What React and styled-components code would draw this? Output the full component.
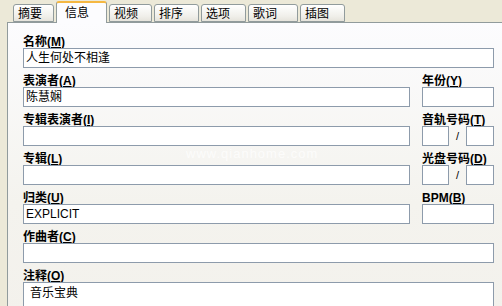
import React from "react";
import styled, { createGlobalStyle } from "styled-components";

const GlobalStyle = createGlobalStyle`
  html, body {
    margin: 0;
    padding: 0;
    background: #ece9d8;
    font-family: "Liberation Sans", "Noto Sans CJK SC", sans-serif;
  }
`;

const Window = styled.div`
  width: 502px;
  height: 306px;
  overflow: hidden;
  background: #ece9d8;
  position: relative;
`;

const TabStrip = styled.div`
  display: flex;
  align-items: flex-end;
  height: 22px;
  padding-left: 13px;
  gap: 2px;
  position: relative;
  z-index: 2;
`;

const Tab = styled.div`
  box-sizing: border-box;
  width: ${(p) => p.$w}px;
  height: ${(p) => (p.$active ? 22 : 18)}px;
  margin-bottom: ${(p) => (p.$active ? -1 : 0)}px;
  padding-left: ${(p) => (p.$active ? 8 : 4)}px;
  border: 1px solid #919b9c;
  border-bottom: ${(p) => (p.$active ? "none" : "1px solid #919b9c")};
  border-top: ${(p) => (p.$active ? "2px solid #f5b842" : "1px solid #919b9c")};
  border-radius: 3px 3px 0 0;
  background: ${(p) =>
    p.$active ? "#fcfcfe" : "linear-gradient(#ffffff, #f0efea 70%, #e6e4dc)"};
  font-size: 12px;
  line-height: ${(p) => (p.$active ? 17 : 15)}px;
  color: #000;
  font-family: "Noto Sans CJK SC", sans-serif;
`;

const Panel = styled.div`
  margin-left: 7px;
  height: 300px;
  box-sizing: border-box;
  border: 1px solid #919b9c;
  border-right: none;
  background: linear-gradient(#fcfcfe, #f4f3ee 60%, #f3f1ec);
  padding: 14px 8px 0 15px;
  display: flex;
  flex-direction: column;
  gap: 8px;
`;

const Row = styled.div`
  display: flex;
  gap: 12px;
`;

const Field = styled.div`
  display: flex;
  flex-direction: column;
  width: ${(p) => p.$w}px;
`;

const Label = styled.div`
  height: 11px;
  line-height: 11px;
  font-size: 12px;
  font-weight: bold;
  white-space: nowrap;
  color: #000;
  font-family: "Liberation Sans", "Noto Sans CJK SC", sans-serif;
`;

const Input = styled.div`
  box-sizing: border-box;
  height: ${(p) => p.$h || 20}px;
  width: ${(p) => (p.$w ? `${p.$w}px` : "auto")};
  border: 1px solid #8d9bab;
  background: #fff;
  padding: ${(p) => p.$pad || "2px 0 0 2px"};
  font-size: 12px;
  line-height: 15px;
  font-family: "Liberation Sans", "Noto Sans CJK SC", sans-serif;
  color: #000;
`;

const Pair = styled.div`
  display: flex;
  align-items: center;
  justify-content: space-between;
  font-size: 11px;
`;

const Slash = styled.span`
  width: 17px;
  text-align: center;
  font-family: "Liberation Sans", sans-serif;
`;

const Watermark = styled.div`
  position: absolute;
  left: 186px;
  top: 146px;
  font-size: 13px;
  letter-spacing: 1px;
  color: rgba(255, 255, 255, 0.7);
  font-family: "Liberation Sans", sans-serif;
`;

const tabs = [
  ["摘要", 41],
  ["信息", 51],
  ["视频", 43],
  ["排序", 45],
  ["选项", 45],
  ["歌词", 50],
  ["插图", 45],
];

const Lbl = ({ text, k }) => (
  <Label>
    {text}(<u>{k}</u>)
  </Label>
);

export default function App() {
  return (
    <Window>
      <GlobalStyle />
      <TabStrip>
        {tabs.map(([t, w]) => (
          <Tab key={t} $w={w} $active={t === "信息"}>
            {t}
          </Tab>
        ))}
      </TabStrip>
      <Panel>
        <Field $w={471}>
          <Lbl text="名称" k="M" />
          <Input>人生何处不相逢</Input>
        </Field>
        <Row>
          <Field $w={387}>
            <Lbl text="表演者" k="A" />
            <Input>陈慧娴</Input>
          </Field>
          <Field $w={72}>
            <Lbl text="年份" k="Y" />
            <Input />
          </Field>
        </Row>
        <Row>
          <Field $w={387}>
            <Lbl text="专辑表演者" k="I" />
            <Input />
          </Field>
          <Field $w={72}>
            <Lbl text="音轨号码" k="T" />
            <Pair>
              <Input $w={27} />
              <Slash>/</Slash>
              <Input $w={28} />
            </Pair>
          </Field>
        </Row>
        <Row>
          <Field $w={387}>
            <Lbl text="专辑" k="L" />
            <Input />
          </Field>
          <Field $w={72}>
            <Lbl text="光盘号码" k="D" />
            <Pair>
              <Input $w={27} />
              <Slash>/</Slash>
              <Input $w={28} />
            </Pair>
          </Field>
        </Row>
        <Row>
          <Field $w={387}>
            <Lbl text="归类" k="U" />
            <Input>EXPLICIT</Input>
          </Field>
          <Field $w={72}>
            <Lbl text="BPM" k="B" />
            <Input />
          </Field>
        </Row>
        <Field $w={471}>
          <Lbl text="作曲者" k="C" />
          <Input />
        </Field>
        <Field $w={471}>
          <Lbl text="注释" k="O" />
          <Input $h={40} $pad="3px 0 0 6px">音乐宝典</Input>
        </Field>
      </Panel>
      <Watermark>www.qianhome.com</Watermark>
    </Window>
  );
}
